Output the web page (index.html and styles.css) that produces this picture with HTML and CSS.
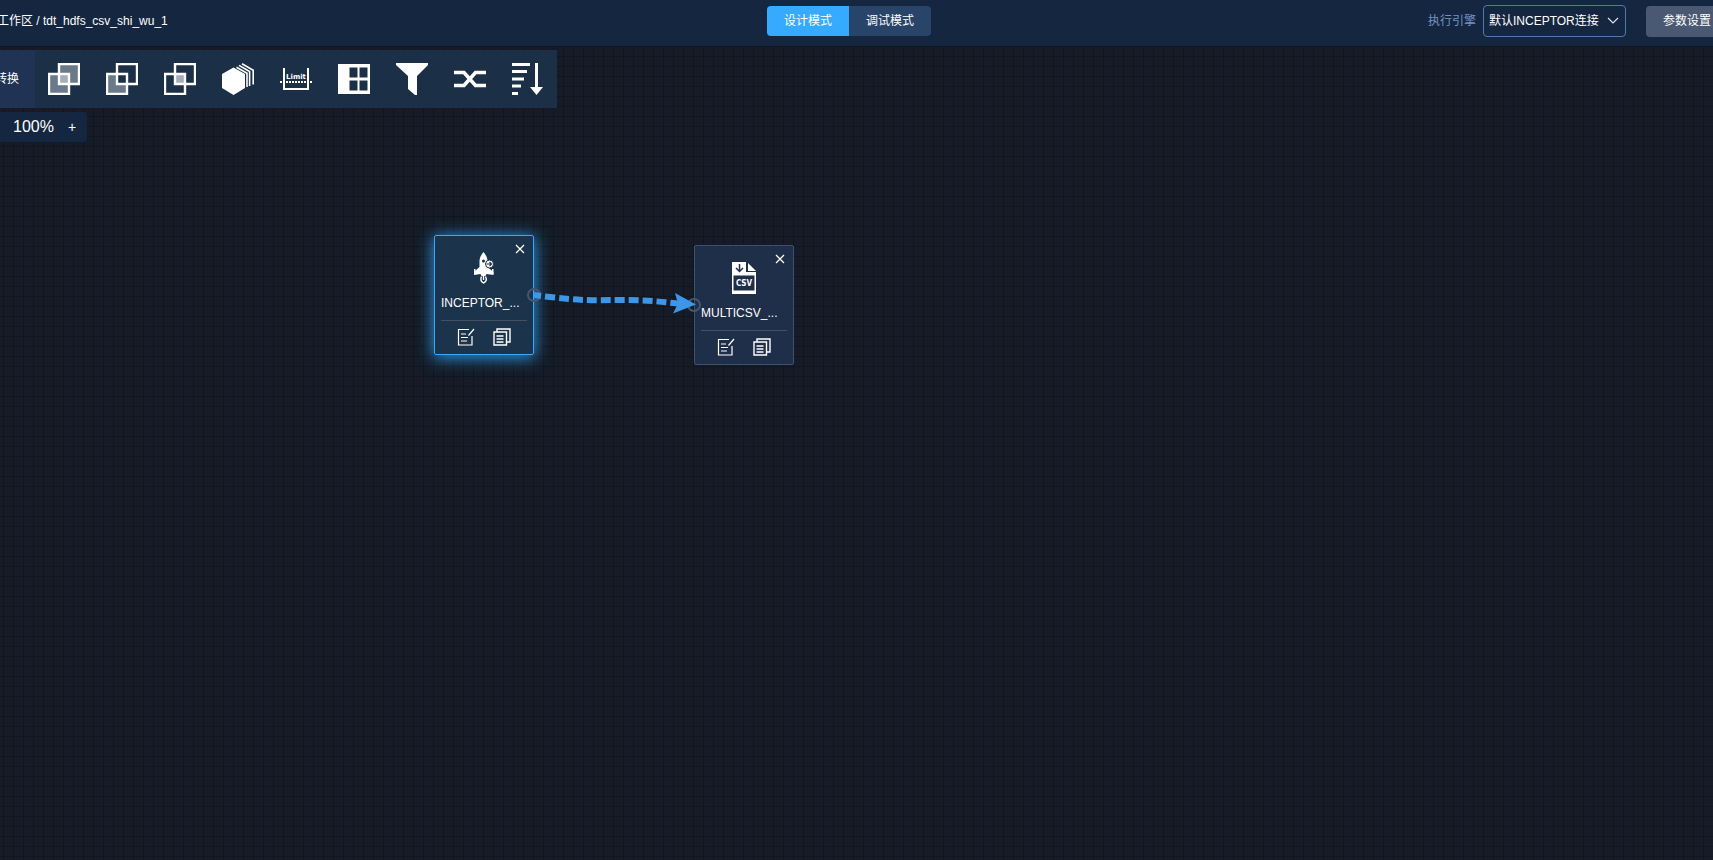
FILE: index.html
```html
<!DOCTYPE html>
<html lang="zh-CN">
<head>
<meta charset="utf-8">
<title>tdt_hdfs_csv_shi_wu_1</title>
<link rel="stylesheet" href="styles.css">
</head>
<body>
<svg class="defs" aria-hidden="true">
  <symbol id="close" viewBox="0 0 10 10"><path d="M1 1l8 8M9 1l-8 8" fill="none" stroke="#fff" stroke-width="1.3"/></symbol>
  <symbol id="edit" viewBox="0 0 18 18"><path d="M12 1.500H1.500V17H15V8M4 6h5M4 9.500h7M4 13h6M17 1l-5.500 6.500" fill="none" stroke="#fff" stroke-width="1.200"/></symbol>
  <symbol id="copy" viewBox="0 0 18 18"><path d="M1 4h12.500v13H1zM4 4V1h13v13h-3.500M3.500 8h7M3.500 11h7M3.500 14h7" fill="none" stroke="#fff" stroke-width="1.400"/></symbol>
</svg>
<header class="header">
  <div class="crumbs">工作区 / tdt_hdfs_csv_shi_wu_1</div>
  <div class="modes">
    <button class="mode mode-active" type="button">设计模式</button>
    <button class="mode" type="button">调试模式</button>
  </div>
  <div class="actions">
    <label class="engine-label" for="engine">执行引擎</label>
    <div class="engine">
      <select id="engine" class="engine-select"><option>默认INCEPTOR连接</option></select>
      <svg class="engine-arrow" viewBox="0 0 12 8"><path d="M1 1l5 5 5-5" fill="none" stroke="#dfe6f0" stroke-width="1.200"/></svg>
    </div>
    <button class="settings" type="button">参数设置</button>
  </div>
</header>
<main class="canvas">
  <div class="toolbar">
    <div class="group">转换</div>
    <button class="tool" type="button" aria-label="并集"><svg viewBox="0 0 32 32"><path d="M11 1h20v20H11zM1 11h20v20H1z" fill="#6b7a89"/><path d="M11 11h10v10H11z" fill="#a4afb9"/><path d="M11 1h20v20H11zM1 11h20v20H1z" fill="none" stroke="#fff" stroke-width="2.400"/></svg></button>
    <button class="tool" type="button" aria-label="差集"><svg viewBox="0 0 32 32"><path d="M1 11h20v20H1z" fill="#6b7a89"/><path d="M11 11h10v10H11z" fill="#1b3047"/><path d="M11 1h20v20H11zM1 11h20v20H1z" fill="none" stroke="#fff" stroke-width="2.400"/></svg></button>
    <button class="tool" type="button" aria-label="交集"><svg viewBox="0 0 32 32"><path d="M11 11h10v10H11z" fill="#a4afb9"/><path d="M11 1h20v20H11zM1 11h20v20H1z" fill="none" stroke="#fff" stroke-width="2.400"/></svg></button>
    <button class="tool" type="button" aria-label="聚合"><svg viewBox="0 0 32 32"><path d="M11.500 4.500L23 11v14L11.500 32 0 25V11z" fill="#fff"/><path d="M14.500 4.200L25 10.200V24M17 2.400L27.600 8.500V23M20 .800L31.200 7.200V21.500" fill="none" stroke="#fff" stroke-width="1.600"/></svg></button>
    <button class="tool" type="button" aria-label="限制"><svg viewBox="0 0 32 32"><path d="M4 5v21h24V5" fill="none" stroke="#fff" stroke-width="2"/><path d="M0 19h32" stroke="#fff" stroke-width="2" stroke-dasharray="2 1"/><text class="limit" x="16" y="16" text-anchor="middle">Limit</text></svg></button>
    <button class="tool" type="button" aria-label="窗口"><svg viewBox="0 0 32 32"><path fill-rule="evenodd" fill="#fff" d="M0 1h32v30H0zM11.500 4.500v10h8v-10zM21.500 4.500v10h8v-10zM11.500 17.500v10h8v-10zM21.500 17.500v10h8v-10z"/></svg></button>
    <button class="tool" type="button" aria-label="过滤"><svg viewBox="0 0 32 32"><path d="M0 0h32v2L21 13v19h-2l-7-6V13L0 2z" fill="#fff"/></svg></button>
    <button class="tool" type="button" aria-label="关联"><svg viewBox="0 0 32 32"><path d="M0 9.500h10L21.500 22.500H32M0 22.500h10L21.500 9.500H32" fill="none" stroke="#fff" stroke-width="3.600"/></svg></button>
    <button class="tool" type="button" aria-label="排序"><svg viewBox="0 0 32 32"><path d="M0 0h18v3H0zM0 7h15v3H0zM0 14.500h12v3H0zM0 21.500h9v3H0zM0 29h6v3H0zM23 0h3v24h5l-6.500 8-6.500-8h5z" fill="#fff"/></svg></button>
  </div>
  <div class="zoombar"><span class="zoom-level">100%</span><button class="zoom-in" type="button" aria-label="放大">+</button></div>
  <article class="node node-source">
    <button class="close" type="button" aria-label="关闭"><svg viewBox="0 0 10 10"><use href="#close"/></svg></button>
    <svg class="node-icon" viewBox="0 0 32 32"><path fill="#fff" d="M15.500 0c2.500 3 4 6 4 9v6l6 5v3l-7-1-1 2h-4l-1-2L6 23v-3l5.500-5V9c0-3 1.500-6 4-9z"/><path fill="#fff" d="M6 17h1.500v5H6zM24 17h1.500v5H24z"/><circle cx="15.500" cy="9" r="1.500" fill="#1b3047"/><circle cx="21.500" cy="12" r="4" fill="#fff" stroke="#1b3047"/><path d="M18.500 12h5M21.500 10l2 2-2 2" fill="none" stroke="#1b3047" stroke-width="1.200"/><path d="M13.500 24.500c-1.500 3-.5 5 2 6.500 3-1.500 3.500-3.500 2-6.500M15.500 24v4" fill="none" stroke="#fff" stroke-width="1.400"/></svg>
    <div class="node-name">INCEPTOR_...</div>
    <div class="node-tools">
      <button class="node-tool" type="button" aria-label="编辑"><svg viewBox="0 0 18 18"><use href="#edit"/></svg></button>
      <button class="node-tool" type="button" aria-label="复制"><svg viewBox="0 0 18 18"><use href="#copy"/></svg></button>
    </div>
  </article>
  <article class="node node-target">
    <button class="close" type="button" aria-label="关闭"><svg viewBox="0 0 10 10"><use href="#close"/></svg></button>
    <svg class="node-icon" viewBox="0 0 32 32"><path fill="#fff" d="M4 0h14v10h10v22H4z"/><path fill="#fff" d="M20 1l8 8h-8z"/><path fill="#202e4a" d="M5.500 13.500h21v15h-21z"/><path d="M11.500 2v7M8 6l3.500 3.500L15 6" fill="none" stroke="#202e4a" stroke-width="1.500"/><text class="csv" x="16" y="24" text-anchor="middle">CSV</text></svg>
    <div class="node-name">MULTICSV_...</div>
    <div class="node-tools">
      <button class="node-tool" type="button" aria-label="编辑"><svg viewBox="0 0 18 18"><use href="#edit"/></svg></button>
      <button class="node-tool" type="button" aria-label="复制"><svg viewBox="0 0 18 18"><use href="#copy"/></svg></button>
    </div>
  </article>
  <svg class="link" viewBox="0 0 180 40">
    <circle cx="13" cy="15" r="6" fill="none" stroke="#46566f" stroke-width="2"/>
    <circle cx="173" cy="25" r="6" fill="none" stroke="#46566f" stroke-width="2"/>
    <path d="M13 15C65 22 78 20 98 20s40 1 62 4" fill="none" stroke="#3e96e8" stroke-width="6" stroke-dasharray="10 4" stroke-dashoffset="3"/>
    <path d="M154 13l21 11.500-23 9 5-10z" fill="#3e96e8"/>
  </svg>
</main>
</body>
</html>
```
FILE: styles.css
```css
* { box-sizing: border-box; }
html, body { height: 100%; }
body {
  margin: 0;
  display: flex;
  flex-direction: column;
  overflow: hidden;
  background: #151c27;
  color: #fff;
  font: 12px/18px "Liberation Sans", "Noto Sans CJK SC", sans-serif;
}
button, select { font: inherit; color: inherit; border: 0; padding: 0; background: none; }
svg { display: block; }
.defs { position: absolute; width: 0; height: 0; }
.header {
  flex: none;
  display: grid;
  grid-template-columns: 1fr auto 1fr;
  align-items: center;
  height: 46px;
  margin: 0 -20px 0 -35px;
  padding: 0 5px 4px;
  background: #152640;
}
.crumbs { padding-left: 27px; white-space: nowrap; }
.modes { display: flex; border-radius: 4px; overflow: hidden; background: #284469; }
.mode { width: 82px; height: 30px; }
.mode-active { background: #35aaff; }
.actions { display: flex; align-items: center; justify-content: flex-end; }
.engine-label { color: #7593c4; margin-right: 7px; }
.engine { position: relative; margin-right: 20px; }
.engine-select {
  display: block;
  appearance: none;
  width: 143px;
  height: 32px;
  padding: 0 5px;
  border: 1px solid #5079b0;
  border-radius: 4px;
}
.engine-arrow { position: absolute; right: 7px; top: 12px; width: 12px; height: 8px; pointer-events: none; }
.settings { width: 82px; height: 31px; border-radius: 4px; background: #4a5872; }
.canvas {
  flex: 1;
  position: relative;
  display: flex;
  flex-direction: column;
  align-items: flex-start;
  gap: 4px;
  padding-top: 4px;
  background-image: linear-gradient(#10151e 1px, transparent 1px), linear-gradient(90deg, #10151e 1px, transparent 1px);
  background-size: 10px 10px;
  background-position: 3px 0;
}
.toolbar { display: flex; background: #1b3047; }
.group { display: flex; align-items: center; justify-content: flex-end; width: 35px; padding-right: 16px; background: #203354; white-space: nowrap; }
.tool { display: flex; align-items: center; justify-content: center; width: 58px; height: 58px; }
.tool svg { width: 32px; height: 32px; }
.limit { font: bold 7px "DejaVu Sans", sans-serif; fill: #fff; }
.csv { font: bold 8px "DejaVu Sans Condensed", "DejaVu Sans", sans-serif; fill: #fff; }
.zoombar { display: flex; align-items: center; gap: 14px; height: 30px; padding: 0 11px 0 13px; border-radius: 0 4px 4px 0; background: #152640; font-size: 16px; }
.zoom-in { font-size: 14px; line-height: 18px; }
.node {
  position: absolute;
  width: 100px;
  height: 120px;
  padding: 16px 6px 0;
  border: 1px solid;
  border-radius: 2px;
}
.node-source { left: 434px; top: 189px; border-color: #35aaff; background: rgba(29, 57, 85, .8); box-shadow: 0 2px 16px 1px #2d93df; }
.node-target { left: 694px; top: 199px; border-color: #40516f; background: rgba(34, 51, 83, .8); }
.close { position: absolute; right: 8px; top: 8px; }
.close svg { width: 10px; height: 10px; }
.node-icon { width: 32px; height: 32px; margin: 0 auto; }
.node-name { margin-top: 10px; white-space: nowrap; }
.node-tools { display: flex; justify-content: center; gap: 18px; margin-top: 8px; padding-top: 7px; border-top: 1px solid #42505f; }
.node-tool svg { width: 18px; height: 18px; }
.link { position: absolute; left: 521px; top: 234px; width: 180px; height: 40px; }
```
